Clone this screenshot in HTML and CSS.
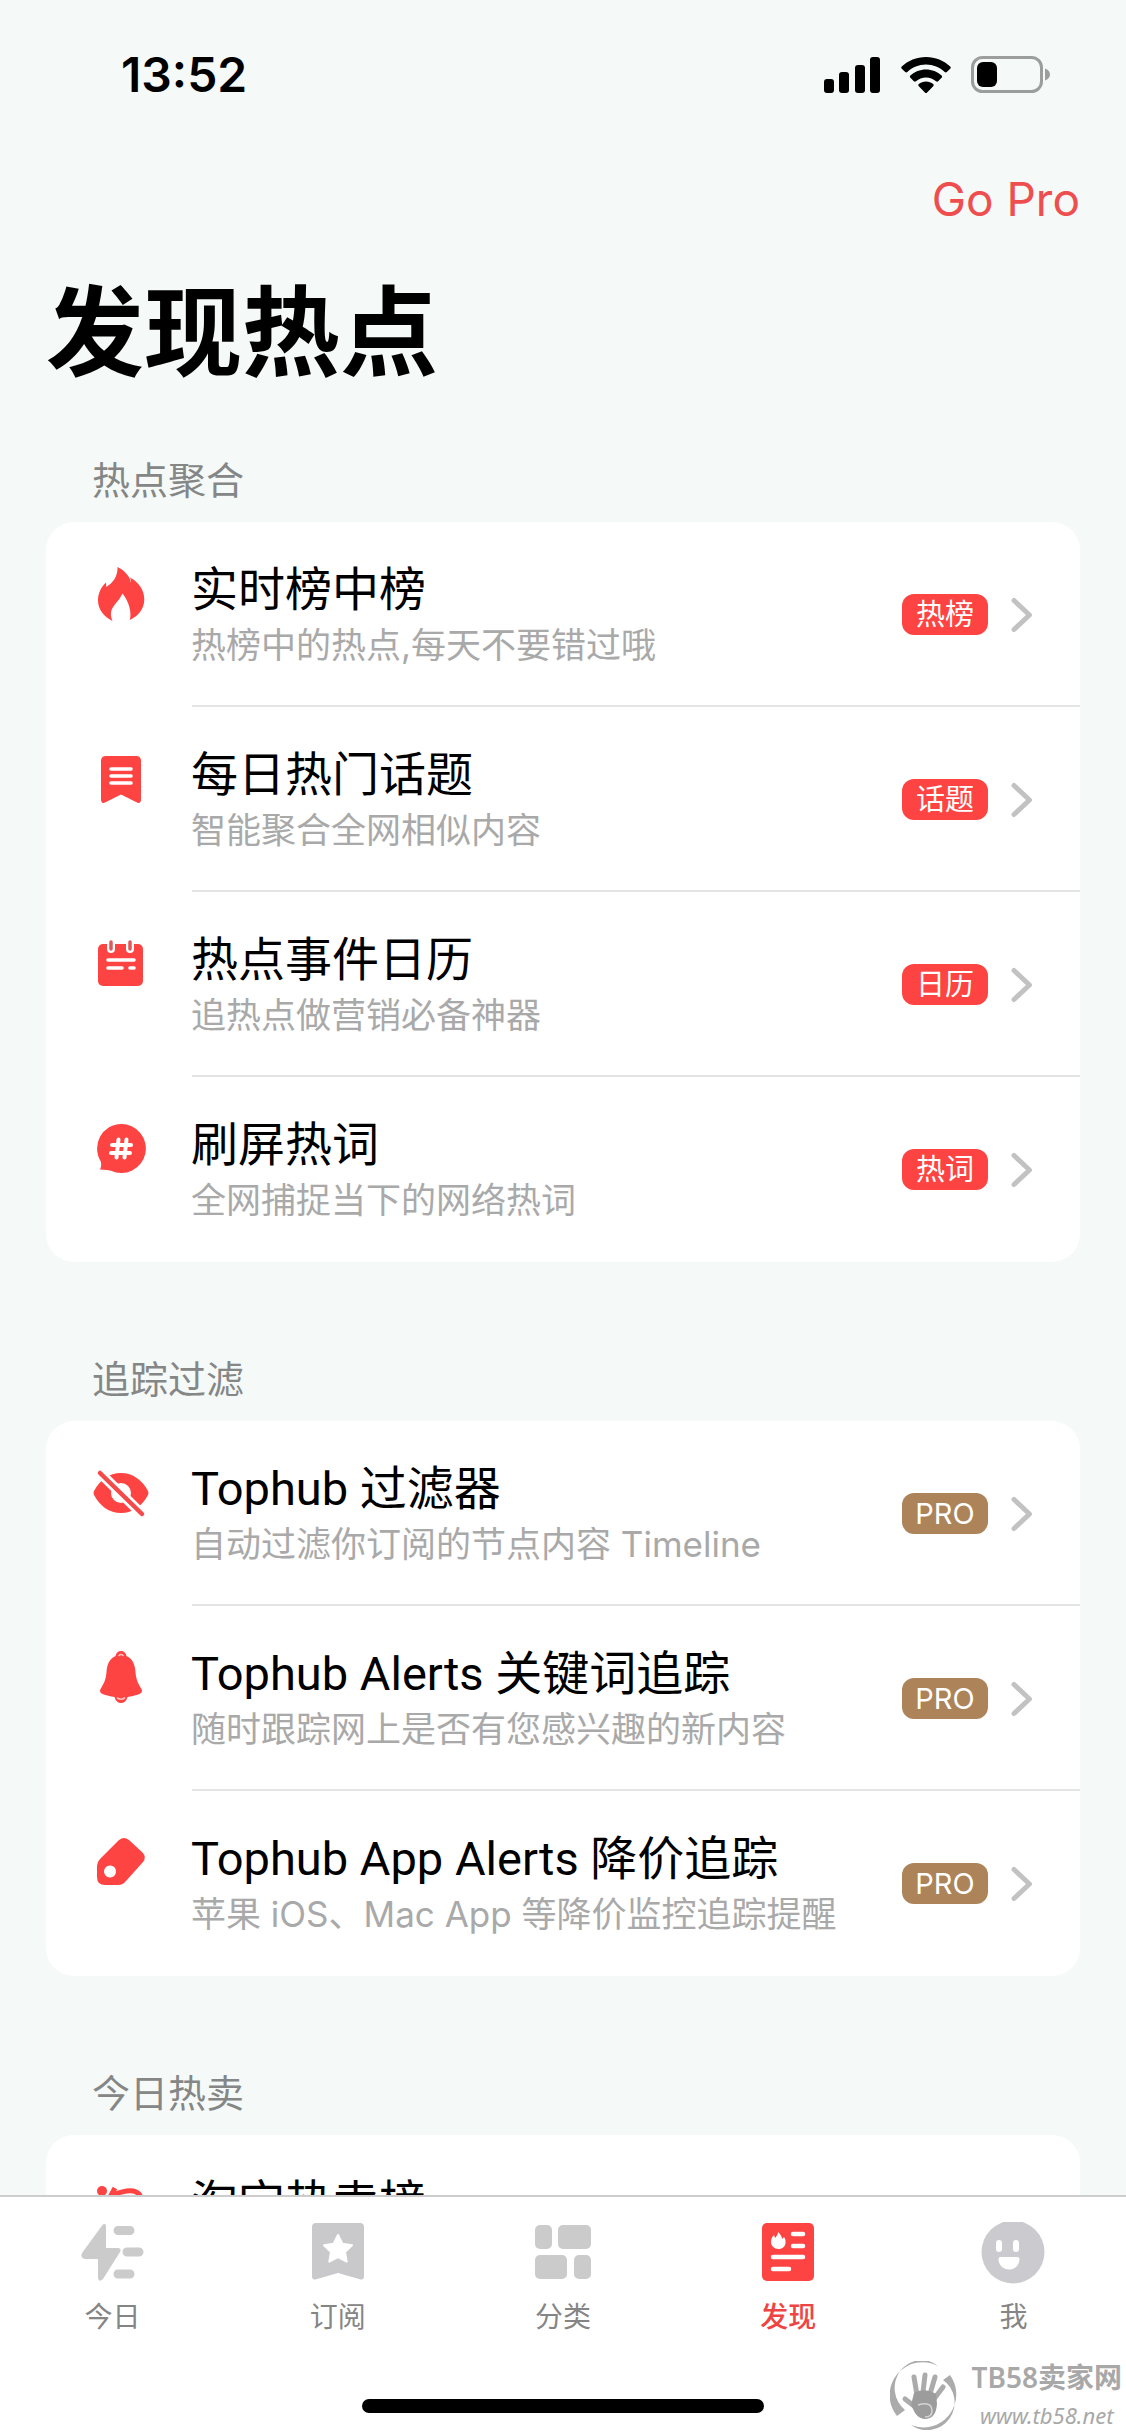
FILE: index.html
```
<!DOCTYPE html>
<html lang="zh-CN">
<head>
<meta charset="utf-8">
<meta name="viewport" content="width=device-width, initial-scale=1">
<title>发现热点</title>
<link rel="stylesheet" href="styles.css">
</head>
<body>
<svg class="defs" aria-hidden="true">
  <symbol id="chevron" viewBox="0 0 24 36"><path d="M4 3.500 19.500 18 4 32.500" fill="none" stroke="#c2c2c2" stroke-width="5" stroke-linecap="round" stroke-linejoin="round"/></symbol>
</svg>
<div class="app">
  <header class="status">
    <time class="clock">13:52</time>
    <div class="signals">
      <svg width="57" height="36" viewBox="0 0 57 36" aria-label="信号"><rect x="0" y="22" width="10" height="14" rx="3"/><rect x="15" y="15" width="10" height="21" rx="3"/><rect x="31" y="8" width="10" height="28" rx="3"/><rect x="46" y="0" width="10" height="36" rx="3"/></svg>
      <svg width="50" height="36" viewBox="0 0 50 36" aria-label="无线网络"><path d="M25 0C15.500 0 7 3.600.8 9.500c-.7.700-.7 1.500 0 2.200l3.400 3.400c.6.600 1.500.6 2.100 0C11.300 10.400 17.800 7.600 25 7.600s13.700 2.800 18.700 7.500c.6.600 1.500.6 2.100 0l3.400-3.400c.7-.7.7-1.500 0-2.200C43 3.600 34.500 0 25 0z"/><path d="M25 12.500c-6 0-11.500 2.300-15.600 6.100-.7.700-.7 1.500 0 2.200l3.500 3.400c.6.600 1.400.6 2.100 0 2.700-2.400 6.200-3.800 10-3.800s7.300 1.400 10 3.800c.7.600 1.500.6 2.100 0l3.500-3.400c.7-.7.7-1.500 0-2.200C36.500 14.800 31 12.500 25 12.500z"/><path d="M25 24.500c-2.800 0-5.300 1-7.200 2.600-.7.600-.7 1.400 0 2.100l6.100 6.200c.6.700 1.600.7 2.200 0l6.100-6.200c.7-.7.7-1.500 0-2.100-1.900-1.600-4.400-2.600-7.200-2.600z"/></svg>
      <svg width="79" height="37" viewBox="0 0 79 37" aria-label="电量"><rect x="1.500" y="1.500" width="69" height="34" rx="10" fill="none" stroke="#9c9e9e" stroke-width="3"/><rect x="6" y="6" width="20" height="25" rx="6"/><path d="M74 12.500c3 1 5 3.300 5 6s-2 5-5 6z" fill="#9c9e9e"/></svg>
    </div>
  </header>

  <main class="content">
    <nav class="topbar"><a class="pro-link" href="#pro">Go Pro</a></nav>
    <h1 class="page-title">发现热点</h1>

    <section class="group">
      <h2 class="group-title">热点聚合</h2>
      <ul class="card">
        <li><a class="row" href="#rank">
          <svg class="icon" viewBox="0 0 56 56"><path fill="#fe4443" d="M24.500 1c7.500 3.500 12.500 9.500 13.500 16 .3-1.800-.3-3.800-1.200-5.500 9 4.500 14.500 12.500 14.500 22 0 9-6 16.500-14.500 20.500 2-7-.5-18-7.300-26.500-3.500 8-10.800 12.500-11.500 19-.3 3 .3 6 1.500 8.500C11 51 5 43 5 34.500c0-7 3-13.500 8-18 .3 1.800.2 3 .2 4.500C20 17 25 10 24.500 1z"/></svg>
          <span class="text"><span class="title">实时榜中榜</span><span class="sub">热榜中的热点,每天不要错过哦</span></span>
          <span class="badge">热榜</span><svg class="chevron"><use href="#chevron"/></svg></a></li>
        <li><a class="row" href="#topics">
          <svg class="icon" viewBox="0 0 56 56"><path fill="#fe4443" d="M13 5h30q5 0 5 5v38q0 6-5 3L28 43.500 13 51q-5 3-5-3V10q0-5 5-5z"/><path d="M18 18h20M18 25h20M18 32h20" fill="none" stroke="#fff" stroke-width="3.600" stroke-linecap="round"/></svg>
          <span class="text"><span class="title">每日热门话题</span><span class="sub">智能聚合全网相似内容</span></span>
          <span class="badge">话题</span><svg class="chevron"><use href="#chevron"/></svg></a></li>
        <li><a class="row" href="#calendar">
          <svg class="icon" viewBox="0 0 56 56"><rect x="5" y="8" width="45" height="42" rx="5" fill="#fe4443"/><path d="M18 5v8M37 5v8" stroke="#fff" stroke-width="8" stroke-linecap="round"/><path d="M18 6v7M37 6v7" stroke="#dd5a5c" stroke-width="3.500" stroke-linecap="round"/><path d="M15 24h26M15 32h14M37 32h4" fill="none" stroke="#fff" stroke-width="3.600" stroke-linecap="round"/></svg>
          <span class="text"><span class="title">热点事件日历</span><span class="sub">追热点做营销必备神器</span></span>
          <span class="badge">日历</span><svg class="chevron"><use href="#chevron"/></svg></a></li>
        <li><a class="row" href="#words">
          <svg class="icon" viewBox="0 0 56 56"><path fill="#fe4443" d="M28 3a24.500 24.500 0 1 1-10 46.700c-3-.5-6-1-11-1.200 1.500-3 1.300-6 .8-8A24.500 24.500 0 0 1 28 3z"/><path d="M25.500 18.500l-2 18M33.500 18.500l-2 18M19 24h19M18 32h19" fill="none" stroke="#fff" stroke-width="4" stroke-linecap="round"/></svg>
          <span class="text"><span class="title">刷屏热词</span><span class="sub">全网捕捉当下的网络热词</span></span>
          <span class="badge">热词</span><svg class="chevron"><use href="#chevron"/></svg></a></li>
      </ul>
    </section>

    <section class="group">
      <h2 class="group-title">追踪过滤</h2>
      <ul class="card">
        <li><a class="row" href="#filter">
          <svg class="icon" viewBox="0 0 56 56"><path fill="#fe4443" d="M28 8c12 0 21 7 27 18q1 2 0 4c-6 11-15 18-27 18S7 41 1 30q-1-2 0-4C7 15 16 8 28 8z"/><circle cx="28" cy="28" r="10" fill="#fff"/><path d="M3 4 52 52" stroke="#fff" stroke-width="10"/><path d="M7 8 49 49" stroke="#f54a4a" stroke-width="4.500" stroke-linecap="round"/></svg>
          <span class="text"><span class="title">Tophub 过滤器</span><span class="sub">自动过滤你订阅的节点内容 Timeline</span></span>
          <span class="badge pro">PRO</span><svg class="chevron"><use href="#chevron"/></svg></a></li>
        <li><a class="row" href="#alerts">
          <svg class="icon" viewBox="0 0 56 56"><path fill="#fe4443" d="M28 1c3 0 5 2 5.500 5C40 9 42 15 42.500 22c.5 8 3 12 6 17 1 2 .5 4-2 5-3.500 1.300-8 2.500-12 3-1 4-3.500 6-6.500 6s-5.500-2-6.500-6c-4-.5-8.500-1.700-12-3-2.500-1-3-3-2-5 3-5 5.500-9 6-17C14 15 16 9 22.500 6 23 3 25 1 28 1z"/><path d="M26 5.500q2-2 4 0M24.500 48q3.500 2.500 7 0" fill="none" stroke="#ffc0bd" stroke-width="1.600" stroke-linecap="round"/></svg>
          <span class="text"><span class="title">Tophub Alerts 关键词追踪</span><span class="sub">随时跟踪网上是否有您感兴趣的新内容</span></span>
          <span class="badge pro">PRO</span><svg class="chevron"><use href="#chevron"/></svg></a></li>
        <li><a class="row" href="#price">
          <svg class="icon" viewBox="0 0 56 56"><path fill="#fe4443" fill-rule="evenodd" d="M26 5q5-4 10 0L49 17q5 5 1 10L33 46q-3 4-8 4H12q-8 0-8-8V31q0-4 3-7zM17 30.500a6 6 0 1 0 .1 0z"/></svg>
          <span class="text"><span class="title">Tophub App Alerts 降价追踪</span><span class="sub">苹果 iOS、Mac App 等降价监控追踪提醒</span></span>
          <span class="badge pro">PRO</span><svg class="chevron"><use href="#chevron"/></svg></a></li>
      </ul>
    </section>

    <section class="group">
      <h2 class="group-title">今日热卖</h2>
      <ul class="card">
        <li><a class="row" href="#taobao">
          <svg class="icon" viewBox="0 0 56 56"><circle cx="9" cy="12" r="5" fill="#fe4443"/><path d="M22 9l-5 9M20 16Q46 5 49 22v14q0 10-12 8M4 22q14 6 1 24M22 24h18M20 32h22M31 24v16M22 40h18" fill="none" stroke="#fe4443" stroke-width="5"/></svg>
          <span class="text"><span class="title">淘宝热卖榜</span></span>
          <svg class="chevron"><use href="#chevron"/></svg></a></li>
      </ul>
    </section>
  </main>

  <footer class="dock">
    <nav class="tabs">
      <a class="tab" href="#today"><svg class="tab-icon" viewBox="0 0 64 64"><path fill="#cbcbcc" d="M20 5q4-6 5-1v22h12q4 0 2 4L22 57q-4 4-5-1V37H4q-5-1-3-6zM37 4h12a4.500 4.500 0 0 1 0 9H37a4.500 4.500 0 0 1 0-9zM46 25.500h12a4.500 4.500 0 0 1 0 9H46a4.500 4.500 0 0 1 0-9zM37 47.500h12a4.500 4.500 0 0 1 0 9H37a4.500 4.500 0 0 1 0-9z"/></svg><span>今日</span></a>
      <a class="tab" href="#subs"><svg class="tab-icon" viewBox="0 0 64 64"><path fill="#c9c9cc" d="M10 1h44q4 0 4 4v49q0 5-5 3L32 51 11 57q-5 2-5-3V5q0-4 4-4z"/><path fill="#fff" stroke="#fff" stroke-width="2" stroke-linejoin="round" d="m32 13 4.400 8.800 9.600 1.400-7 6.800 1.700 9.600L32 35l-8.700 4.600L25 30l-7-6.800 9.600-1.400z"/></svg><span>订阅</span></a>
      <a class="tab" href="#cats"><svg class="tab-icon" viewBox="0 0 64 64" fill="#cbcbcc"><rect x="4" y="3" width="17" height="24" rx="5"/><rect x="27" y="3" width="33" height="24" rx="5"/><rect x="4" y="33" width="32" height="24" rx="5"/><rect x="43" y="33" width="17" height="24" rx="5"/></svg><span>分类</span></a>
      <a class="tab active" href="#discover" aria-current="page"><svg class="tab-icon" viewBox="0 0 64 64"><rect x="6" y="1" width="52" height="58" rx="5" fill="#fe4443"/><path fill="#fff" d="M22 10c3 3 4 5 4 7l2-2c2 3 1.500 4 1.500 5.500 0 4-3 6.500-7 6.500s-7.500-3-7.500-7c0-3 1-5 3-7l1 3c2-2 3-4 3-6z"/><path d="M37 12h10M37 24h10M17 35h30M17 47h16" fill="none" stroke="#fff" stroke-width="4.500" stroke-linecap="round"/></svg><span>发现</span></a>
      <a class="tab" href="#me"><svg class="tab-icon" viewBox="0 0 64 64"><circle cx="32" cy="30" r="31.500" fill="#cbcbcf"/><rect x="15" y="18" width="6" height="12" rx="3" fill="#fff"/><rect x="32" y="18" width="6" height="12" rx="3" fill="#fff"/><path fill="#fff" d="M20 35h16q3 0 2.500 3c-1 6-5 9.500-10.500 9.500S18.500 44 17.500 38q-.5-3 2.500-3z"/></svg><span>我</span></a>
    </nav>
    <div class="home-bar"></div>
    <div class="watermark">
      <svg width="70" height="70" viewBox="0 0 70 70"><path fill="#ababab" d="M48 5A33 33 0 0 0 7 55l8-6A26 27 0 0 1 48 5zM60 14l-7 5a27 27 0 0 1-32 45A33 33 0 0 0 60 14z"/><path d="M27 34 24 16M33 31 35 14M40 33 45 16M44 38 53 26M28 48 15 38" stroke="#ababab" stroke-width="5" stroke-linecap="round"/><path fill="#9c9c9c" d="M24 32q10-6 22 1l1 10q-1 14-11 15-7 0-11-6l-4-8z"/><path d="M28 44q14-4 14 6 0 6-7 6" fill="none" stroke="#d5d5d5" stroke-width="1.500"/></svg>
      <div class="mark-text"><strong>TB58卖家网</strong><em>www.tb58.net</em></div>
    </div>
  </footer>
</div>
</body>
</html>
```
FILE: styles.css
```
* { box-sizing: border-box; }

body {
  margin: 0;
  background: #f5f9f8;
  color: #000;
  font-family: Inter, "Noto Sans CJK SC", sans-serif;
}

a { color: inherit; text-decoration: none; }
ul { list-style: none; margin: 0; padding: 0; }
h1, h2 { margin: 0; }
svg { display: block; flex: none; }
.defs { position: absolute; width: 0; height: 0; }

.app { display: flex; flex-direction: column; height: 100vh; }

.status {
  display: flex;
  justify-content: space-between;
  align-items: center;
  flex: none;
  height: 149px;
  padding: 0 76px 0 121px;
}
.clock { font-size: 48px; font-weight: 600; line-height: 64px; }
.signals { display: flex; align-items: center; gap: 20px; }

.content { flex: 1; min-height: 0; overflow-y: auto; scrollbar-width: none; padding: 0 46px; }
.topbar { display: flex; justify-content: flex-end; padding-top: 18px; }
.pro-link { color: #ef4e4e; font-size: 46px; line-height: 64px; }
.page-title { margin-top: 38px; font-size: 98px; line-height: 128px; }

.group { padding-top: 59px; }
.group + .group { padding-top: 93px; }
.group-title { padding: 0 46px; font-size: 38px; font-weight: 400; line-height: 48px; color: #858787; }
.card { margin-top: 18px; background: #fff; border-radius: 28px; overflow: hidden; }

.row { display: flex; align-items: center; height: 185px; padding: 0 46px 0 47px; position: relative; }
.icon { width: 56px; height: 56px; align-self: flex-start; margin-top: 44px; }
.text { display: flex; flex-direction: column; align-self: flex-start; flex: 1; padding-top: 37px; margin-left: 42px; }
li:not(:last-child) .row::after { content: ""; position: absolute; bottom: 0; left: 146px; right: 0; height: 2px; background: #e4e4e4; }
.title { font-family: Roboto, "Noto Sans CJK SC", sans-serif; font-size: 47px; line-height: 62px; }
.sub { font-size: 35px; line-height: 48px; color: #a9a9a9; }
.badge { min-width: 86px; padding: 0 12px; border-radius: 12px; background: #fe4443; color: #fff; font-size: 29px; line-height: 41px; text-align: center; }
.badge.pro { background: #ad8359; }
.chevron { width: 24px; height: 36px; margin-left: 22px; }

.dock { position: relative; flex: none; height: 241px; background: #fff; border-top: 2px solid #cdcdcd; }
.tabs { display: flex; padding-top: 25px; }
.tab { flex: 1; display: flex; flex-direction: column; align-items: center; gap: 11px; color: #858585; font-size: 28px; line-height: 40px; }
.tab.active { color: #ef4444; font-weight: 500; }
.tab-icon { width: 64px; height: 64px; }
.home-bar { width: 402px; max-width: 50%; height: 14px; margin: 62px auto 0; border-radius: 7px; background: #000; }

.watermark { position: absolute; right: 4px; bottom: 2px; display: flex; align-items: center; gap: 12px; color: #a8a8a8; font-family: "Noto Sans", "Noto Sans CJK SC", sans-serif; }
.mark-text { display: flex; flex-direction: column; align-items: center; }
.mark-text strong { font-size: 28px; font-weight: 600; line-height: 38px; }
.mark-text em { font-size: 22px; line-height: 38px; }
```
